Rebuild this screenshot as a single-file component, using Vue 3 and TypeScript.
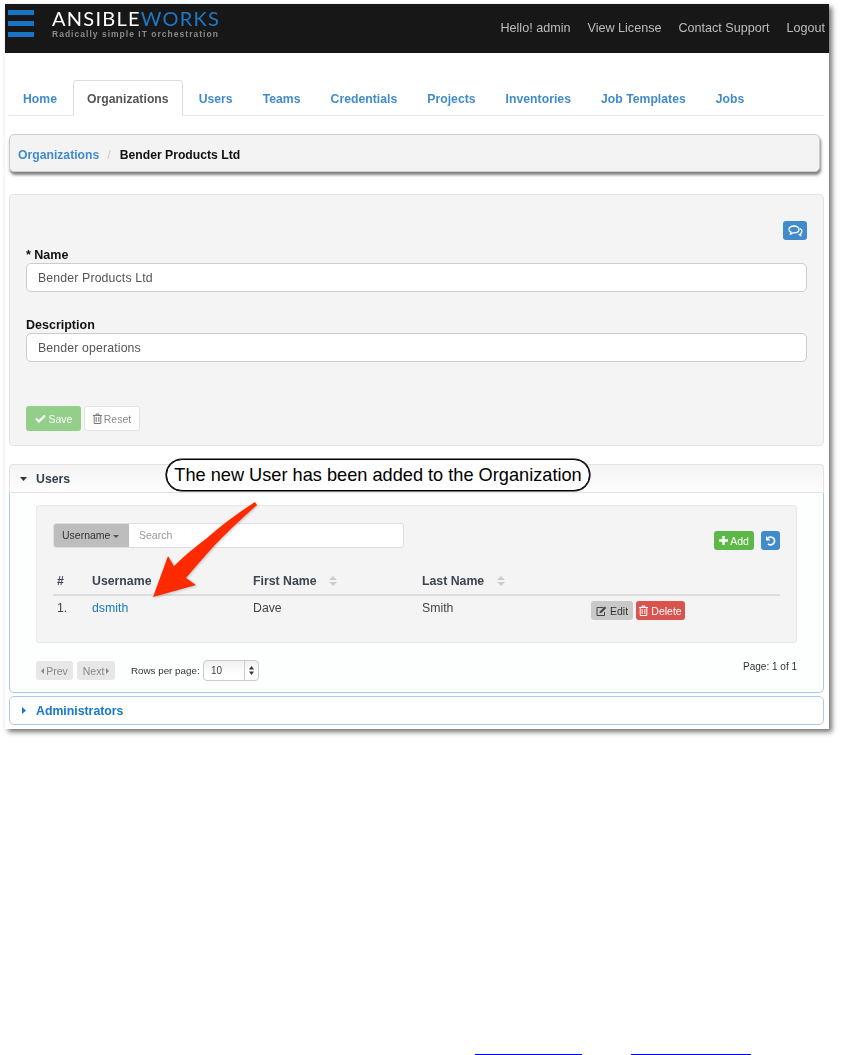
<script setup lang="ts">
const tabs = ['Home', 'Organizations', 'Users', 'Teams', 'Credentials', 'Projects', 'Inventories', 'Job Templates', 'Jobs']
const navLinks = ['Hello! admin', 'View License', 'Contact Support', 'Logout']
const fields = [
  { label: '* Name', value: 'Bender Products Ltd' },
  { label: 'Description', value: 'Bender operations' },
]
</script>

<template>
  <div class="page">
    <div class="window">
      <header class="navbar">
        <div class="burger"><i></i><i></i><i></i></div>
        <div class="logo">
          <div class="logo-name">ANSIBLE<span>WORKS</span></div>
          <div class="logo-tag">Radically simple IT orchestration</div>
        </div>
        <nav class="nav-links">
          <span v-for="l in navLinks" :key="l">{{ l }}</span>
        </nav>
      </header>

      <div class="content">
        <ul class="tabs">
          <li v-for="t in tabs" :key="t" :class="{ active: t === 'Organizations' }">{{ t }}</li>
        </ul>

        <div class="crumbs">
          <span class="crumb-link">Organizations</span>
          <span class="crumb-sep">/</span>
          <span class="crumb-now">Bender Products Ltd</span>
        </div>

        <section class="form-well">
          <div class="form-top">
            <button class="btn-chat" type="button" aria-label="Comments">
              <svg width="15" height="12" viewBox="0 0 15 12"><path d="M6 1C3 1 1 2.500 1 4.400c0 1.200.8 2.200 2 2.800L2.500 9 5 7.800h1c3 0 5-1.500 5-3.400S9 1 6 1z" fill="none" stroke="#fff" stroke-width="1.300"/><path d="M12 3.500c1.300.6 2 1.600 2 2.700 0 1-.6 1.900-1.600 2.500l.4 1.800-2.300-1.300" fill="none" stroke="#fff" stroke-width="1.200"/></svg>
            </button>
          </div>
          <div v-for="f in fields" :key="f.label" class="field">
            <label>{{ f.label }}</label>
            <div class="input">{{ f.value }}</div>
          </div>
          <div class="form-actions">
            <button class="btn save" type="button">
              <svg width="11" height="9" viewBox="0 0 11 9"><path d="M1 4.500l3 3 6-6" fill="none" stroke="#fff" stroke-width="2.200"/></svg>
              Save
            </button>
            <button class="btn reset" type="button">
              <svg width="9" height="11" viewBox="0 0 9 11"><path d="M0 2.500h9M3 2.500V1h3v1.500M1.200 2.500v8h6.600v-8M3.200 4v5M5.800 4v5" fill="none" stroke="#777" stroke-width="1"/></svg>
              Reset
            </button>
          </div>
        </section>

        <section class="acc open">
          <div class="acc-head">
            <svg class="caret" width="7" height="4" viewBox="0 0 7 4"><path d="M0 0h7L3.500 4z" fill="#333"/></svg>
            Users
          </div>
          <div class="acc-body">
            <div class="list-well">
              <div class="list-top">
                <div class="search">
                  <span class="search-by">Username <b></b></span>
                  <span class="search-input">Search</span>
                </div>
                <div class="list-btns">
                  <button class="btn add" type="button">
                    <svg width="9" height="9" viewBox="0 0 9 9"><path d="M4.500 0v9M0 4.500h9" stroke="#fff" stroke-width="2.400"/></svg>
                    Add
                  </button>
                  <button class="btn refresh" type="button" aria-label="Refresh">
                    <svg width="11" height="11" viewBox="0 0 11 11"><path d="M3 3a3.900 3.900 0 1 1 0 5.800" fill="none" stroke="#fff" stroke-width="1.700"/><path d="M1 1v4.500h4.500z" fill="#fff"/></svg>
                  </button>
                </div>
              </div>
              <div class="row head">
                <span>#</span>
                <span>Username</span>
                <span>First Name <svg class="sort" width="8" height="10" viewBox="0 0 8 10"><path d="M0 4l4-4 4 4zM0 6l4 4 4-4z" fill="#ccc"/></svg></span>
                <span>Last Name <svg class="sort" width="8" height="10" viewBox="0 0 8 10"><path d="M0 4l4-4 4 4zM0 6l4 4 4-4z" fill="#ccc"/></svg></span>
                <span></span>
              </div>
              <div class="row body">
                <span>1.</span>
                <span class="user-link">dsmith</span>
                <span>Dave</span>
                <span>Smith</span>
                <span class="row-btns">
                  <button class="btn edit" type="button">
                    <svg width="11" height="10" viewBox="0 0 11 10"><path d="M7.500 1.500H1v8h7.500V6" fill="none" stroke="#444" stroke-width="1"/><path d="M3.500 7.200l.5-2L8.800.5l1.500 1.500L5.500 6.700z" fill="#444"/></svg>
                    Edit
                  </button>
                  <button class="btn del" type="button">
                    <svg width="9" height="11" viewBox="0 0 9 11"><path d="M0 2.500h9M3 2.500V1h3v1.500M1.200 2.500v8h6.600v-8M3.200 4v5M5.800 4v5" fill="none" stroke="#fff" stroke-width="1"/></svg>
                    Delete
                  </button>
                </span>
              </div>
            </div>
            <div class="pager">
              <div class="pager-left">
                <button class="btn page-btn" type="button"><i class="tri-l"></i>Prev</button>
                <button class="btn page-btn" type="button">Next<i class="tri-r"></i></button>
                <span class="rows-label">Rows per page:</span>
                <div class="rows-select">
                  <span class="rows-val">10</span>
                  <span class="rows-arrows"><svg width="5" height="9" viewBox="0 0 5 9"><path d="M0 3.500L2.500 0 5 3.500zM0 5.500L2.500 9 5 5.500z" fill="#333"/></svg></span>
                </div>
              </div>
              <span class="page-count">Page: 1 of 1</span>
            </div>
          </div>
        </section>

        <section class="acc closed">
          <svg class="caret" width="4" height="7" viewBox="0 0 4 7"><path d="M0 0l4 3.500L0 7z" fill="#1778c8"/></svg>
          Administrators
        </section>
      </div>

      <div class="bubble">The new User has been added to the Organization</div>
      <svg class="arrow" width="124" height="110" viewBox="0 0 124 110">
        <path d="M118 7Q90 25 70 43 50 58 37 71L31 61 16 102 59 90 49 83Q60 70 76 52 95 32 120 10z" fill="#ff2a00"/>
      </svg>
    </div>

    <div class="foot-links"><a></a><a></a></div>
  </div>
</template>

<style>
html, body { margin: 0; background: #fff; }
</style>

<style scoped>
* { box-sizing: border-box; }
.page {
  width: 842px;
  height: 1055px;
  padding: 4px 0 0 5px;
  display: flex;
  flex-direction: column;
  overflow: hidden;
  font-family: "Liberation Sans", Arial, sans-serif;
  font-size: 12.300px;
  color: #333;
}
.window {
  position: relative;
  width: 824px;
  height: 725px;
  background: #fff;
  box-shadow: 3px 3px 5px rgba(0, 0, 0, .55);
}
.navbar, .content { filter: blur(.3px); }
.navbar {
  height: 49px;
  background: #171717;
  display: flex;
  align-items: flex-start;
  padding-left: 3px;
}
.burger { width: 26px; padding-top: 6px; display: flex; flex-direction: column; gap: 6px; }
.burger i { display: block; height: 5px; background: #1a74c4; }
.logo { margin-left: 18px; padding-top: 5px; }
.logo-name {
  font-family: Lato, "Liberation Sans", sans-serif;
  font-weight: 400;
  font-size: 20px;
  line-height: 18px;
  color: #fff;
  letter-spacing: 1.250px;
}
.logo-name span { color: #1e78c8; }
.logo-tag {
  margin-top: 2px;
  font-size: 8.500px;
  font-weight: 700;
  line-height: 11px;
  letter-spacing: 1.020px;
  color: #8a8a8a;
}
.nav-links {
  margin-left: auto;
  display: flex;
  gap: 17px;
  padding-top: 17px;
  font-size: 12.600px;
  line-height: 14px;
  color: #bdbdbd;
  margin-right: 4px;
}
.content { padding: 0 5px 0 4px; }
.tabs {
  list-style: none;
  margin: 27px 0 0;
  padding: 0;
  height: 36px;
  display: flex;
  gap: 2px;
  border-bottom: 1px solid #e6e6e6;
  font-size: 12.200px;
  letter-spacing: .03px;
}
.tabs li {
  height: 36px;
  padding: 11px 14px 0;
  font-weight: 700;
  line-height: 14px;
  color: #428bca;
  border-top: 1px solid transparent;
}
.tabs li.active {
  color: #555;
  background: #fff;
  border: 1px solid #ddd;
  border-bottom-color: #fff;
  border-radius: 4px 4px 0 0;
  padding: 11px 13px 0;
}
.crumbs {
  margin-top: 18px;
  width: 811px;
  height: 38px;
  background: #f3f3f3;
  border: 1px solid #ccc;
  border-radius: 5px;
  box-shadow: 1px 3px 3px rgba(0, 0, 0, .5);
  display: flex;
  align-items: center;
  padding: 3px 0 0 8px;
  font-size: 12.200px;
  font-weight: 700;
}
.crumb-link { color: #428bca; }
.crumb-sep { color: #ccc; font-weight: 400; margin: 0 9px 0 8px; }
.crumb-now { color: #111; }
.form-well {
  margin-top: 22px;
  height: 252px;
  background: #f4f4f4;
  border: 1px solid #e3e3e3;
  border-radius: 4px;
  padding: 26px 16px 0;
}
.form-top { display: flex; justify-content: flex-end; height: 27px; }
.btn-chat {
  width: 24px;
  height: 19px;
  border: 0;
  padding: 0;
  border-radius: 3px;
  background: #428bca;
  display: flex;
  align-items: center;
  justify-content: center;
}
.field { height: 70px; }
.field label { display: block; font-weight: 700; color: #111; line-height: 14px; height: 15px; font-size: 12.500px; }
.input {
  height: 29px;
  background: #fff;
  border: 1px solid #ccc;
  border-radius: 5px;
  padding: 0 11px;
  line-height: 28px;
  font-size: 12.300px;
  color: #555;
  letter-spacing: .14px;
}
.form-actions { display: flex; gap: 3px; margin-top: 18px; }
.btn {
  font-family: inherit;
  display: inline-flex;
  align-items: center;
  justify-content: center;
  padding: 0;
  border-radius: 3px;
  font-size: 10.500px;
  border: 1px solid transparent;
}
.save { width: 55px; height: 25px; background: #93cf89; color: #fff; gap: 3px; }
.reset { width: 56px; height: 25px; background: #fff; border-color: #e2e2e2; color: #8a8a8a; gap: 2px; }
.acc { width: 815px; }
.open { margin-top: 18px; }
.acc-head {
  height: 29px;
  background: linear-gradient(#f4f4f4, #fdfdfd);
  border: 1px solid #e2e2e2;
  border-radius: 4px 4px 0 0;
  display: flex;
  align-items: center;
  padding-left: 10px;
  font-weight: 700;
  color: #34404e;
}
.caret { margin-right: 9px; flex: none; }
.acc-body {
  height: 200px;
  background: #fdfefe;
  border: 1px solid #a9cbe6;
  border-top: 0;
  border-radius: 0 0 5px 5px;
  padding: 12px 26px 0;
}
.list-well {
  height: 138px;
  background: #f4f4f4;
  border: 1px solid #e8e8e8;
  border-radius: 3px;
  padding: 17px 16px 0;
}
.list-top { display: flex; justify-content: space-between; height: 50px; }
.search {
  width: 351px;
  height: 25px;
  display: flex;
  background: #fff;
  border: 1px solid #ddd;
  border-radius: 3px;
  font-size: 10.500px;
  overflow: hidden;
}
.search-by {
  width: 76px;
  background: #bdbdbd;
  color: #333;
  padding-left: 9px;
  margin: -1px 0 -1px -1px;
  line-height: 25px;
}
.search-by b {
  display: inline-block;
  vertical-align: middle;
  border: 3px solid transparent;
  border-top-color: #555;
  border-bottom: 0;
}
.search-input { padding-left: 10px; line-height: 23px; color: #999; }
.list-btns { display: flex; gap: 7px; padding-top: 8px; }
.add { width: 40px; height: 19px; background: #5cb947; color: #fff; gap: 2px; }
.refresh { width: 19px; height: 19px; background: #428bca; }
.row { display: grid; grid-template-columns: 35px 161px 169px 169px 1fr; padding-left: 4px; }
.row.head {
  height: 23px;
  font-weight: 700;
  color: #3b4450;
  border-bottom: 2px solid #ddd;
  line-height: 16px;
}
.sort { margin-left: 9px; vertical-align: -1px; }
.row.body { padding-top: 4px; line-height: 16px; color: #444; }
.user-link { color: #1778c8; }
.row-btns { display: flex; gap: 3px; padding-top: 1px; }
.edit { width: 42px; height: 19px; background: #c9c9c9; color: #333; gap: 3px; }
.del { width: 49px; height: 19px; background: #d9534f; color: #fff; gap: 3px; }
.pager { display: flex; justify-content: space-between; margin-top: 17px; }
.pager-left { display: flex; align-items: center; height: 21px; }
.page-btn { width: 37px; height: 19px; background: #e7e7e7; color: #888; gap: 2px; }
.page-btn + .page-btn { width: 38px; margin-left: 4px; }
.tri-l, .tri-r { width: 0; height: 0; border: 3px solid transparent; }
.tri-l { border-right-color: #888; border-left: 0; }
.tri-r { border-left-color: #888; border-right: 0; }
.rows-label { margin-left: 16px; font-size: 9.800px; color: #333; width: 72px; white-space: nowrap; }
.rows-select {
  width: 56px;
  height: 21px;
  display: flex;
  background: linear-gradient(#f0f0f0, #fff 70%);
  border: 1px solid #ccc;
  border-radius: 4px;
  font-size: 10px;
  color: #444;
  line-height: 19px;
}
.rows-val { width: 40px; padding-left: 7px; }
.rows-arrows { flex: 1; border-left: 1px solid #ccc; display: flex; align-items: center; justify-content: center; }
.page-count { font-size: 10px; color: #333; line-height: 12px; padding-top: 1px; }
.closed {
  margin-top: 3px;
  height: 29px;
  display: flex;
  align-items: center;
  background: #fff;
  border: 1px solid #a9cbe6;
  border-radius: 5px;
  padding-left: 12px;
  font-weight: 700;
  color: #1778c8;
}
.closed .caret { margin-right: 10px; }
.bubble {
  position: absolute;
  left: 161px;
  top: 455px;
  width: 424px;
  height: 32px;
  background: #fff;
  border: 1px solid #000;
  box-shadow: 0 0 0 .6px #000;
  border-radius: 16px;
  padding-top: 1px;
  font-size: 18.200px;
  line-height: 29px;
  color: #000;
  text-align: center;
  white-space: nowrap;
}
.arrow { position: absolute; left: 132px; top: 491px; filter: drop-shadow(1px 1px 1px rgba(0, 0, 0, .2)); }
.foot-links { margin-top: 325px; display: flex; gap: 49px; padding-left: 470px; }
.foot-links a { display: block; height: 1px; background: #0000ff; width: 107px; }
.foot-links a + a { width: 120px; }
</style>
